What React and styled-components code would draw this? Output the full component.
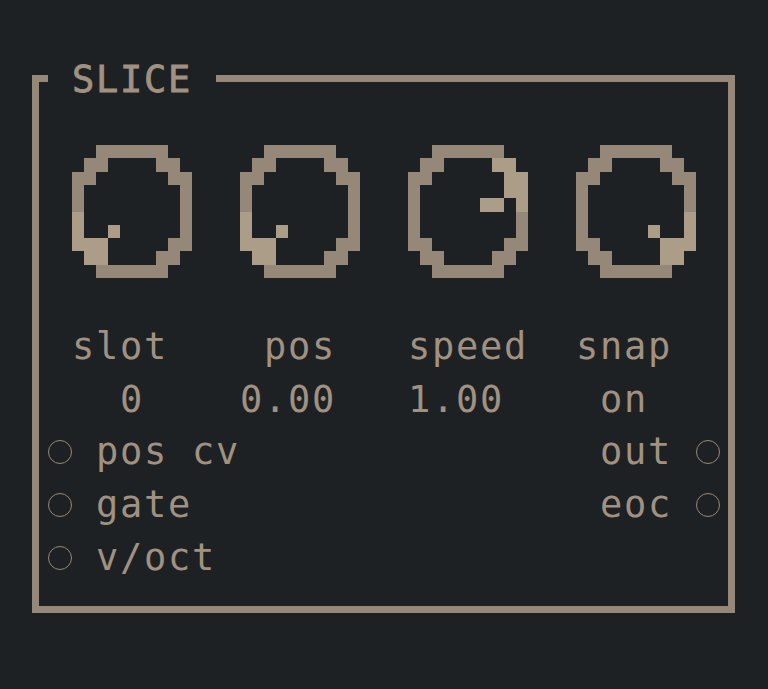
import styled, { createGlobalStyle } from 'styled-components'

const GlobalStyle = createGlobalStyle`
  html, body {
    margin: 0;
    padding: 0;
    background: #1e2123;
  }
  body {
    width: 768px;
    height: 689px;
    overflow: hidden;
    font-family: "DejaVu Sans Mono", "Liberation Mono", monospace;
  }
`

const FRAME = '#968878'
const LIGHT = '#ab9d87'
const TEXT = '#a09181'

const Panel = styled.section`
  margin: 75px 0 0 32px;
  width: 703px;
`

const Header = styled.div`
  display: flex;
  align-items: center;
  height: 7px;
`

const Stub = styled.div`
  width: 16px;
  align-self: stretch;
  background: ${FRAME};
`

const Line = styled.div`
  flex: 1;
  align-self: stretch;
  background: ${FRAME};
`

const Title = styled.h1`
  margin: 2px 24px 0;
  width: 120px;
  font-size: 37px;
  font-weight: 400;
  -webkit-text-stroke: 0.8px ${TEXT};
  letter-spacing: 1.72px;
  line-height: 7px;
  color: ${TEXT};
  white-space: nowrap;
`

const Body = styled.div`
  border: 7px solid ${FRAME};
  border-top: none;
  padding: 63px 0 21px;
  display: flex;
  flex-direction: column;
`

const KnobRow = styled.div`
  display: flex;
  gap: 48px;
  padding-left: 33px;
  margin-bottom: 43px;
`

const TextGrid = styled.div`
  display: grid;
  grid-template-columns: repeat(4, 168px);
  padding-left: 33px;
`

const Cell = styled.span`
  font-size: 37px;
  letter-spacing: 1.72px;
  line-height: 52.7px;
  color: ${TEXT};
  white-space: pre;
  padding-left: ${(p) => p.$offset * 24}px;
`

const IoRow = styled.div`
  display: flex;
  justify-content: space-between;
  padding: 0 8px 0 9px;
  font-size: 37px;
  letter-spacing: 1.72px;
  line-height: 52.7px;
  color: ${TEXT};
  white-space: pre;
`

const Port = styled.span`
  display: inline-flex;
  align-items: baseline;
  gap: 24px;
`

const Jack = styled.span`
  display: inline-block;
  width: 24px;
  height: 24px;
  box-sizing: border-box;
  border: 1.6px solid ${FRAME};
  border-radius: 50%;
`

const RING = [
  '..nnnnnn..',
  '.nn....nn.',
  'nn......nn',
  'n........n',
  'n........n',
  'n........n',
  'n........n',
  'nn......nn',
  '.nn....nn.',
  '..nnnnnn..',
]

const withRows = (patch) => RING.map((row, i) => patch[i] || row)

const KNOBS = [
  {
    label: 'slot',
    value: '0',
    pixels: withRows({
      5: 'l........n',
      6: 'l..l.....n',
      7: 'lll.....nn',
      8: '.ll....nn.',
    }),
  },
  {
    label: 'pos',
    value: '0.00',
    pixels: withRows({
      5: 'l........n',
      6: 'l..l.....n',
      7: 'lll.....nn',
      8: '.ll....nn.',
    }),
  },
  {
    label: 'speed',
    value: '1.00',
    pixels: withRows({
      1: '.nn....ll.',
      2: 'nn......ll',
      3: 'n.......ll',
      4: 'n.....ll.l',
    }),
  },
  {
    label: 'snap',
    value: 'on',
    pixels: withRows({
      5: 'n........l',
      6: 'n.....l..l',
      7: 'nn.....lll',
      8: '.nn....ll.',
    }),
  },
]

const Knob = ({ pixels }) => (
  <svg
    width='120'
    height='133'
    viewBox='0 0 10 10'
    preserveAspectRatio='none'
    shapeRendering='crispEdges'
  >
    {pixels.map((row, y) =>
      row.split('').map((c, x) =>
        c === '.' ? null : (
          <rect
            key={`${x}-${y}`}
            x={x}
            y={y}
            width='1'
            height='1'
            fill={c === 'l' ? LIGHT : FRAME}
          />
        )
      )
    )}
  </svg>
)

const center = (text) => Math.floor((5 - text.length) / 2)

const App = () => {
  return (
    <>
      <GlobalStyle />
      <Panel>
        <Header>
          <Stub />
          <Title>SLICE</Title>
          <Line />
        </Header>
        <Body>
          <KnobRow>
            {KNOBS.map((k) => (
              <Knob key={k.label} pixels={k.pixels} />
            ))}
          </KnobRow>
          <TextGrid>
            {KNOBS.map((k) => (
              <Cell key={k.label} $offset={center(k.label)}>
                {k.label}
              </Cell>
            ))}
            {KNOBS.map((k) => (
              <Cell key={k.label} $offset={center(k.value)}>
                {k.value}
              </Cell>
            ))}
          </TextGrid>
          <IoRow>
            <Port>
              <Jack />
              pos cv
            </Port>
            <Port>
              out
              <Jack />
            </Port>
          </IoRow>
          <IoRow>
            <Port>
              <Jack />
              gate
            </Port>
            <Port>
              eoc
              <Jack />
            </Port>
          </IoRow>
          <IoRow>
            <Port>
              <Jack />
              v/oct
            </Port>
          </IoRow>
        </Body>
      </Panel>
    </>
  )
}

export default App
